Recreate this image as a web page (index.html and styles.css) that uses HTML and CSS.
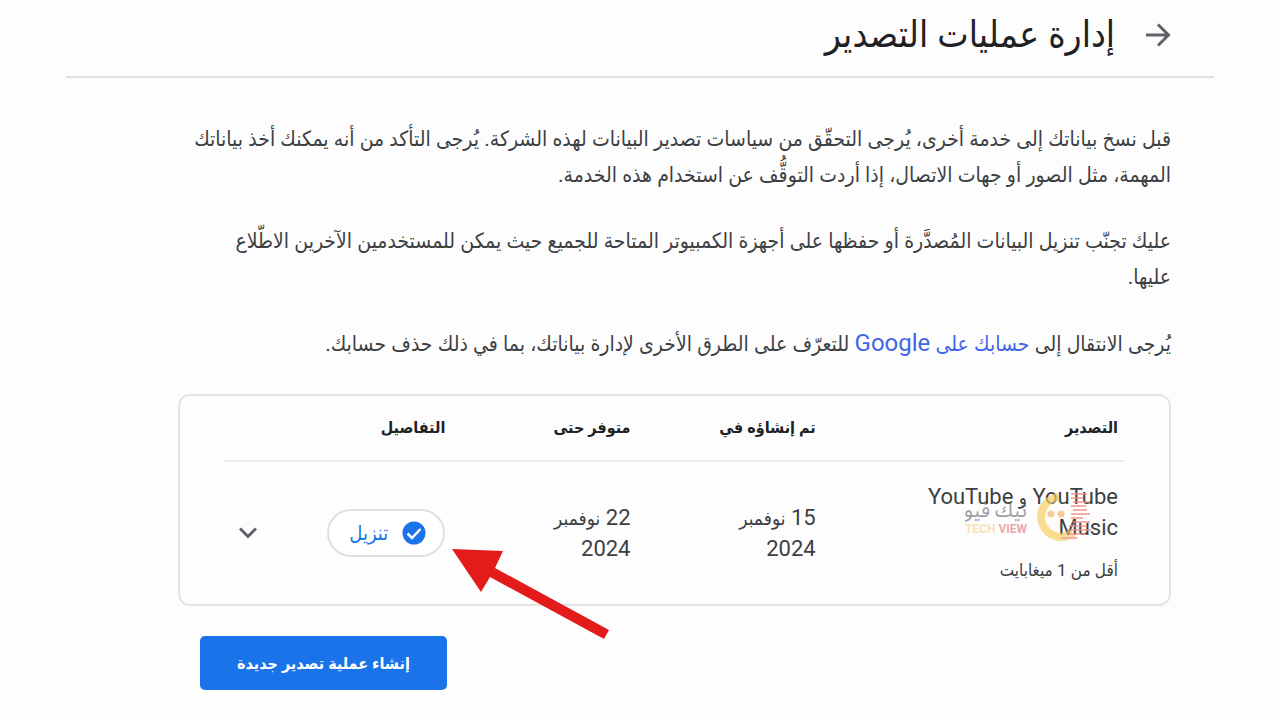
FILE: index.html
```html
<!DOCTYPE html>
<html lang="ar" dir="rtl">
<head>
    <meta charset="UTF-8">
    <meta name="viewport" content="width=device-width, initial-scale=1.0">
    <title>إدارة عمليات التصدير</title>
    <link rel="stylesheet" href="styles.css">
</head>
<body>
    <div class="page">
        <!-- Page Header -->
        <header class="page-header">
            <a class="back-link" href="#" aria-label="رجوع">
                <svg width="28" height="28" viewBox="0 0 28 28" fill="none" stroke="#5f6368" stroke-width="3">
                    <path d="M3 14H25M15 3.500L25.500 14L15 24.500"/>
                </svg>
            </a>
            <h1>إدارة عمليات التصدير</h1>
        </header>

        <main class="content">
            <!-- Intro Text -->
            <div class="intro">
                <p>قبل نسخ بياناتك إلى خدمة أخرى، يُرجى التحقّق من سياسات تصدير البيانات لهذه الشركة. يُرجى التأكد من أنه يمكنك أخذ بياناتك المهمة، مثل الصور أو جهات الاتصال، إذا أردت التوقُّف عن استخدام هذه الخدمة.</p>
                <p>عليك تجنّب تنزيل البيانات المُصدَّرة أو حفظها على أجهزة الكمبيوتر المتاحة للجميع حيث يمكن للمستخدمين الآخرين الاطّلاع عليها.</p>
                <p>يُرجى الانتقال إلى <a href="#">حسابك على <span class="latin">Google</span></a> للتعرّف على الطرق الأخرى لإدارة بياناتك، بما في ذلك حذف حسابك.</p>
            </div>

            <!-- Exports Table -->
            <div class="card">
                <table class="exports">
                    <thead>
                        <tr>
                            <th class="col-export">التصدير</th>
                            <th class="col-date">تم إنشاؤه في</th>
                            <th class="col-date">متوفر حتى</th>
                            <th>التفاصيل</th>
                        </tr>
                    </thead>
                    <tbody>
                        <tr>
                            <td>
                                <div class="export-name">YouTube <span class="arabic">و</span> YouTube Music</div>
                                <div class="export-size">أقل من 1 ميغابايت</div>
                                <div class="watermark">
                                    <svg width="60" height="52" viewBox="0 0 60 52" fill="none">
                                        <path d="M26 7A20 20 0 1 0 40 43" stroke="#f8cf62" stroke-width="8"/>
                                        <circle cx="18" cy="24" r="3.500" fill="#f4b66a"/>
                                        <circle cx="28" cy="24" r="3.500" fill="#f4b66a"/>
                                        <path d="M38 4H54M38 8H50M40 12H56M38 16H53M40 20H54M38 24H57M38 28H50M40 32H57M36 36H54M34 40H58M34 44H52M28 48H44" stroke="#ef8f83" stroke-width="2"/>
                                    </svg>
                                    <div class="watermark-text">
                                        <span class="watermark-ar">تيك فيو</span>
                                        <span class="watermark-en" dir="ltr"><span>TECH</span> VIEW</span>
                                    </div>
                                </div>
                            </td>
                            <td><div class="date">15 <span class="arabic">نوفمبر</span> 2024</div></td>
                            <td><div class="date">22 <span class="arabic">نوفمبر</span> 2024</div></td>
                            <td>
                                <div class="details">
                                    <button class="download" type="button">
                                        <svg width="24" height="24" viewBox="0 0 24 24" fill="none">
                                            <circle cx="12" cy="12" r="11.500" fill="#1a73e8"/>
                                            <path d="M5.500 12.500L10 17L18.500 8" stroke="#fff" stroke-width="2.500"/>
                                        </svg>
                                        تنزيل
                                    </button>
                                    <button class="expand" type="button" aria-label="عرض التفاصيل">
                                        <svg width="20" height="14" viewBox="0 0 20 14" fill="none" stroke="#5f6368" stroke-width="3">
                                            <path d="M2 2.500L10 10.500L18 2.500"/>
                                        </svg>
                                    </button>
                                    <svg class="arrow" width="158" height="92" viewBox="0 0 158 92" fill="#e41b1b">
                                        <path d="M0 1L51 3L43 20L157 82L152 91L38 29L29 44Z"/>
                                    </svg>
                                </div>
                            </td>
                        </tr>
                    </tbody>
                </table>
            </div>

            <div class="actions">
                <button class="create" type="button">إنشاء عملية تصدير جديدة</button>
            </div>
        </main>
    </div>
</body>
</html>
```
FILE: styles.css
```css
/* General Styling */
body {
    margin: 0;
    background: #fdfdfd;
    color: #3c4043;
    font-family: Roboto, 'DejaVu Sans Condensed', 'DejaVu Sans', sans-serif;
    font-size: 21px;
    line-height: 36px;
}

button {
    font-family: inherit;
    cursor: pointer;
}

.page {
    padding: 0 66px;
}

/* Page Header */
.page-header {
    display: flex;
    align-items: center;
    gap: 28px;
    padding: 17px 43px 23px;
    border-bottom: 2px solid #e0e0e0;
}

.back-link {
    display: flex;
}

h1 {
    margin: 0;
    color: #202124;
    font-size: 37px;
    font-weight: normal;
    line-height: 36px;
}

/* Intro Text */
.content {
    padding: 43px 43px 24px 112px;
}

.intro {
    padding-left: 14px;
}

.intro p {
    margin: 0 0 30px;
}

.intro a {
    color: #3f66e8;
    text-decoration: none;
}

.latin {
    font-size: 24px;
}

/* Exports Table */
.card {
    margin-top: 32px;
    padding: 0 44px;
    border: 2px solid #e4e4e4;
    border-radius: 12px;
}

.exports {
    width: 100%;
    table-layout: fixed;
    border-collapse: collapse;
    line-height: 30px;
}

.exports th,
.exports td {
    padding: 0 7px;
    text-align: right;
}

.exports th {
    height: 64px;
    border-bottom: 2px solid #ececec;
    color: #202124;
    font-size: 16px;
}

.exports td {
    position: relative;
    height: 142px;
}

.col-export {
    width: 32%;
}

.col-date {
    width: 19%;
}

.export-name {
    width: 200px;
    font-size: 22px;
}

.export-size {
    margin-top: 12px;
    font-size: 17px;
}

.date {
    width: 100px;
    font-size: 22px;
}

.arabic {
    font-size: 19px;
}

.details {
    display: flex;
    align-items: center;
    justify-content: space-between;
    padding-left: 7px;
}

.download {
    display: flex;
    align-items: center;
    gap: 14px;
    height: 48px;
    padding: 0 17px 0 20px;
    border: 2px solid #e0e0e0;
    border-radius: 24px;
    background: #fff;
    color: #1a73e8;
    font-size: 20px;
}

.expand {
    display: flex;
    padding: 0;
    border: none;
    background: none;
}

/* Red pointer over the download button */
.arrow {
    position: absolute;
    right: -158px;
    top: 86px;
}

/* Watermark */
.watermark {
    position: absolute;
    top: 28px;
    right: 32px;
    display: flex;
    align-items: center;
    gap: 6px;
    opacity: 0.7;
}

.watermark-text {
    display: flex;
    flex-direction: column;
    padding-top: 6px;
}

.watermark-ar {
    color: #77787c;
    font-family: 'Noto Sans Arabic', 'DejaVu Sans', sans-serif;
    font-size: 20px;
    line-height: 20px;
}

.watermark-en {
    color: #e2858b;
    font-size: 12px;
    font-weight: bold;
    line-height: 16px;
}

.watermark-en span {
    color: #f7d790;
}

/* Create Button */
.actions {
    display: flex;
    justify-content: flex-end;
    padding: 30px 0 0 22px;
}

.create {
    height: 54px;
    padding: 0 37px;
    border: none;
    border-radius: 5px;
    background: #1a73e8;
    color: #fff;
    font-size: 16px;
    font-weight: bold;
}
```
